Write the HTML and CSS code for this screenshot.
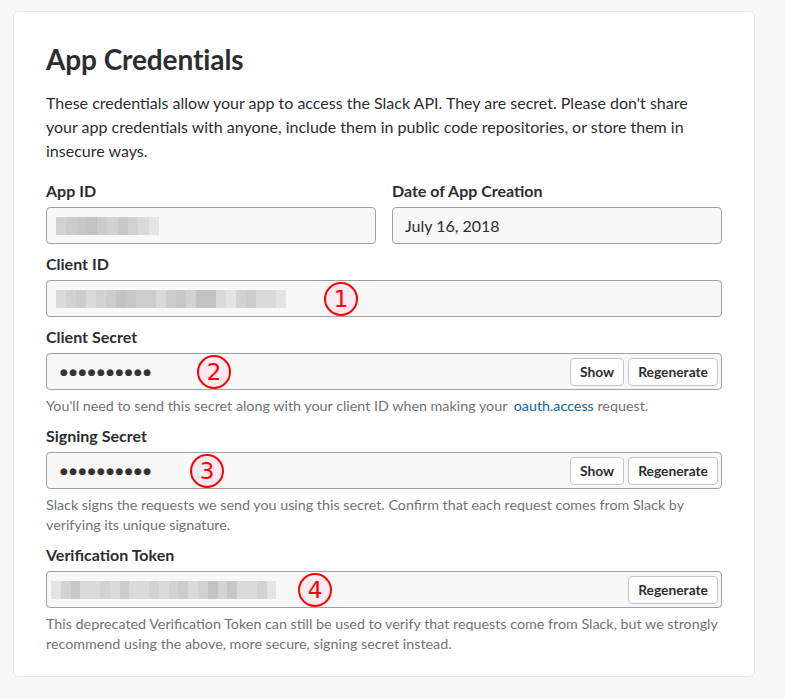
FILE: index.html
```html
<!DOCTYPE html>
<html>
<head>
<meta charset="utf-8">
<link rel="stylesheet" href="styles.css">
</head>
<body>
<div class="card">
  <h1 class="title">App Credentials</h1>
  <p class="intro">These credentials allow your app to access the Slack API. They are secret. Please don't share your app credentials with anyone, include them in public code repositories, or store them in insecure ways.</p>

  <div class="row">
    <div class="field">
      <div class="label">App ID</div>
      <div class="input">
        <span class="blur"><i class="s2"></i><i class="s3"></i><i class="s4"></i><i class="s5"></i><i class="s3"></i><i class="s2"></i><i class="s4"></i><i class="s2"></i><i class="s1"></i><i class="s0"></i></span>
      </div>
    </div>
    <div class="field">
      <div class="label">Date of App Creation</div>
      <div class="input"><span class="value">July 16, 2018</span></div>
    </div>
  </div>

  <div class="field">
    <div class="label">Client ID</div>
    <div class="input">
      <span class="blur narrow"><i class="s1"></i><i class="s2"></i><i class="s3"></i><i class="s1"></i><i class="s2"></i><i class="s3"></i><i class="s5"></i><i class="s4"></i><i class="s6"></i><i class="s6"></i><i class="s1"></i><i class="s3"></i><i class="s4"></i><i class="s2"></i><i class="s5"></i><i class="s5"></i><i class="s1"></i><i class="s0"></i><i class="s2"></i><i class="s3"></i><i class="s1"></i><i class="s1"></i><i class="s0"></i></span>
      <span class="mark m1">1</span>
    </div>
  </div>

  <div class="field">
    <div class="label">Client Secret</div>
    <div class="input">
      <span class="dots">●●●●●●●●●●</span>
      <span class="mark m2">2</span>
      <span class="actions"><button class="btn">Show</button><button class="btn">Regenerate</button></span>
    </div>
    <div class="help">You'll need to send this secret along with your client ID when making your <a class="link" href="#">oauth.access</a> request.</div>
  </div>

  <div class="field">
    <div class="label">Signing Secret</div>
    <div class="input">
      <span class="dots">●●●●●●●●●●</span>
      <span class="mark m3">3</span>
      <span class="actions"><button class="btn">Show</button><button class="btn">Regenerate</button></span>
    </div>
    <div class="help">Slack signs the requests we send you using this secret. Confirm that each request comes from Slack by verifying its unique signature.</div>
  </div>

  <div class="field">
    <div class="label">Verification Token</div>
    <div class="input">
      <span class="blur tight"><i class="s0"></i><i class="s2"></i><i class="s4"></i><i class="s1"></i><i class="s1"></i><i class="s2"></i><i class="s1"></i><i class="s3"></i><i class="s1"></i><i class="s1"></i><i class="s2"></i><i class="s1"></i><i class="s2"></i><i class="s3"></i><i class="s1"></i><i class="s2"></i><i class="s5"></i><i class="s2"></i><i class="s4"></i><i class="s1"></i><i class="s1"></i><i class="s2"></i><i class="s0"></i></span>
      <span class="mark m4">4</span>
      <span class="actions"><button class="btn">Regenerate</button></span>
    </div>
    <div class="help">This deprecated Verification Token can still be used to verify that requests come from Slack, but we strongly recommend using the above, more secure, signing secret instead.</div>
  </div>
</div>
</body>
</html>
```

FILE: styles.css
```css
html, body {
  margin: 0;
  padding: 0;
  background: #f7f7f7;
}
body {
  font-family: Lato, "Liberation Sans", sans-serif;
  color: #2c2d30;
  padding: 11px 0 22px 13px;
}
.card {
  box-sizing: border-box;
  width: 742px;
  background: #ffffff;
  border: 1px solid #e6e6e6;
  border-radius: 6px;
  padding: 29px 32px 22px 32px;
}
.title {
  margin: 0;
  font-size: 28px;
  line-height: 36px;
  font-weight: 700;
  letter-spacing: -0.1px;
}
.intro {
  margin: 14px 0 0 0;
  padding-right: 8px;
  font-size: 16px;
  line-height: 24px;
}
.row {
  display: grid;
  grid-template-columns: 1fr 1fr;
  column-gap: 16px;
  margin-top: 8px;
}
.field {
  margin-top: 10px;
}
.label {
  font-size: 16px;
  line-height: 20px;
  font-weight: 700;
  margin-bottom: 6px;
}
.input {
  position: relative;
  box-sizing: border-box;
  height: 37px;
  background: #f8f8f8;
  border: 1px solid #a0a0a2;
  border-radius: 4px;
  display: flex;
  align-items: center;
  padding: 0 3px 0 9px;
}
.value {
  font-size: 16px;
  padding-left: 3px;
}
.blur {
  display: flex;
  height: 18px;
}
.blur i {
  display: block;
  width: 10.3px;
  height: 18px;
}
.blur.narrow i {
  width: 10px;
}
.blur.tight {
  margin-left: -5px;
}
.blur.tight i {
  width: 9.8px;
}
.s0 { background: #e4e4e4; }
.s1 { background: #dadada; }
.s2 { background: #d2d2d2; }
.s3 { background: #cccccc; }
.s4 { background: #c7c7c7; }
.s5 { background: #c3c3c3; }
.s6 { background: #cdcdcd; }
.dots {
  font-family: "DejaVu Sans", sans-serif;
  font-size: 9px;
  letter-spacing: 1.4px;
  color: #333333;
  padding-left: 4px;
}
.actions {
  margin-left: auto;
  display: flex;
  gap: 4px;
}
.btn {
  box-sizing: border-box;
  height: 28px;
  padding: 0 9px;
  background: #ffffff;
  border: 1px solid #c5c5c5;
  border-radius: 4px;
  font-family: Lato, "Liberation Sans", sans-serif;
  font-size: 13.8px;
  font-weight: 700;
  color: #2c2d30;
}
.help {
  margin: 6px 0 0 0;
  font-size: 14.3px;
  line-height: 20px;
  color: #717274;
}
.link {
  color: #1264a3;
  text-decoration: none;
  margin-left: 3px;
}
.mark {
  position: absolute;
  top: 50%;
  width: 34px;
  height: 34px;
  margin-top: -17px;
  box-sizing: border-box;
  border: 2px solid #ff0000;
  border-radius: 50%;
  background: #fbeaf3;
  color: #ff0000;
  font-family: "DejaVu Sans", sans-serif;
  font-size: 23px;
  line-height: 30px;
  text-align: center;
}
.m1 { left: 277px; }
.m2 { left: 150px; }
.m3 { left: 143px; }
.m4 { left: 251px; }
```
